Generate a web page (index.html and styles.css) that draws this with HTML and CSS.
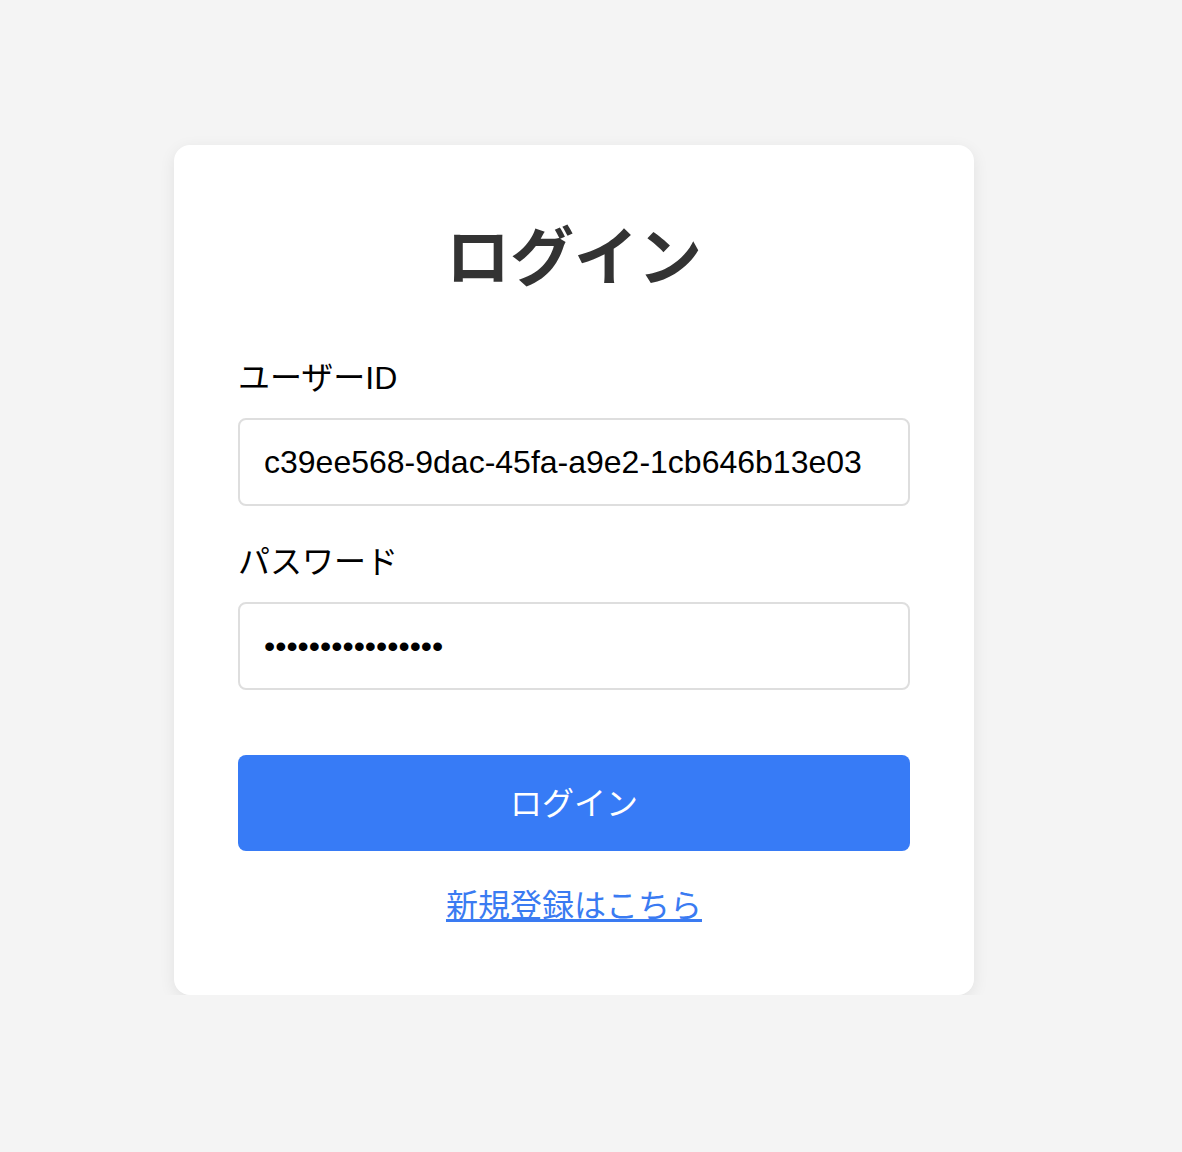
FILE: index.html
```html
<!DOCTYPE html>
<html lang="ja">
<head>
<meta charset="utf-8">
<title>ログイン</title>
<link rel="stylesheet" href="styles.css">
</head>
<body>
  <main class="card">
    <h1 class="title">ログイン</h1>
    <form class="form">
      <div class="field">
        <label class="label" for="userid">ユーザーID</label>
        <input class="input" id="userid" type="text" value="c39ee568-9dac-45fa-a9e2-1cb646b13e03">
      </div>
      <div class="field">
        <label class="label" for="password">パスワード</label>
        <input class="input" id="password" type="password" value="abcdefghijklmnop">
      </div>
      <button class="button" type="button">ログイン</button>
    </form>
    <p class="register"><a href="#" class="register-link">新規登録はこちら</a></p>
  </main>
</body>
</html>
```
FILE: styles.css
```css
html, body {
  margin: 0;
  padding: 0;
}
body {
  background: #f4f4f4;
  font-family: "Liberation Sans", "Noto Sans CJK JP", sans-serif;
  color: #000;
  padding-top: 145px;
  padding-right: 34px;
}
.card {
  width: 800px;
  box-sizing: border-box;
  margin: 0 auto;
  background: #fff;
  border-radius: 16px;
  box-shadow: 0 4px 16px rgba(0, 0, 0, 0.08);
  padding: 65px 64px 65px;
}
.title {
  margin: 0 0 48px;
  font-size: 64px;
  line-height: 96px;
  font-weight: 700;
  color: #333;
  text-align: center;
}
.form {
  display: flex;
  flex-direction: column;
}
.field {
  display: flex;
  flex-direction: column;
  gap: 16px;
  margin-bottom: 32px;
}
.field + .field {
  margin-bottom: 65px;
}
.label {
  font-size: 32px;
  line-height: 48px;
}
.input {
  box-sizing: border-box;
  height: 88px;
  width: 100%;
  border: 2px solid #dedede;
  border-radius: 8px;
  padding: 0 24px;
  font-family: "Liberation Sans", "Noto Sans CJK JP", sans-serif;
  font-size: 32px;
  color: #000;
  background: #fff;
  outline: none;
}
.button {
  height: 96px;
  border: none;
  border-radius: 8px;
  padding: 0 0 5px;
  background: #377bf6;
  color: #fff;
  font-family: "Liberation Sans", "Noto Sans CJK JP", sans-serif;
  font-size: 32px;
  cursor: pointer;
}
.register {
  margin: 31px 0 0;
  text-align: center;
  font-size: 32px;
  line-height: 48px;
}
.register-link {
  color: #3a7bf2;
  text-decoration: underline;
}
```
